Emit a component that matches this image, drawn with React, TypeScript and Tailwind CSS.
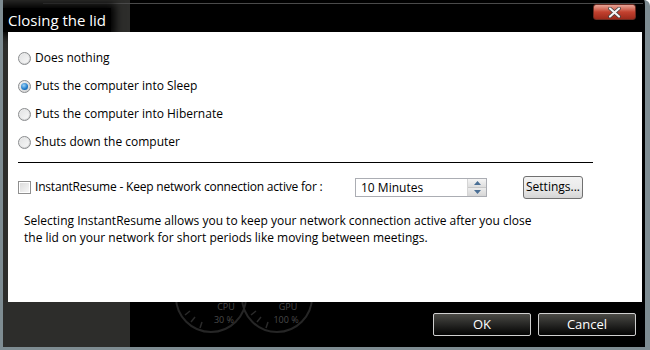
import React from "react";

const font = { fontFamily: '"Open Sans", "Noto Sans", sans-serif' };

function Radio({ checked = false }: { checked?: boolean }) {
  return (
    <span className="flex h-[13px] w-[13px] shrink-0 items-center justify-center rounded-full border border-[#8a8c8e] bg-gradient-to-br from-[#f4f4f4] to-[#cfd0d1]">
      {checked ? (
        <span className="h-[7px] w-[7px] rounded-full bg-[radial-gradient(circle_at_40%_35%,#9fd4f7,#1a78c9_60%,#0d4f8f)]" />
      ) : (
        <span className="h-[9px] w-[9px] rounded-full bg-gradient-to-br from-[#e2e3e4] to-[#f7f7f7]" />
      )}
    </span>
  );
}

function RadioRow({ label, checked }: { label: string; checked?: boolean }) {
  return (
    <div className="flex h-[28px] items-center gap-[4px]">
      <Radio checked={checked} />
      <span>{label}</span>
    </div>
  );
}

function Spinner() {
  return (
    <div className="flex w-[19px] flex-col border-l border-[#d5d5d5]">
      <div className="flex flex-1 items-center justify-center border-b border-[#c8c8c8] bg-gradient-to-b from-[#f5f5f5] to-[#dedede]">
        <svg width="7" height="4" viewBox="0 0 7 4">
          <path d="M0 4 L3.5 0 L7 4 Z" fill="#4a6f95" />
        </svg>
      </div>
      <div className="flex flex-1 items-center justify-center bg-gradient-to-b from-[#ececec] to-[#d6d6d6]">
        <svg width="7" height="4" viewBox="0 0 7 4">
          <path d="M0 0 L3.5 4 L7 0 Z" fill="#4a6f95" />
        </svg>
      </div>
    </div>
  );
}

export default function App() {
  return (
    <div
      className="relative h-[350px] w-[650px] overflow-hidden rounded-tr-[6px] border-b-[3px] border-l-[3px] border-r-[5px] border-[#7e8c92] bg-black text-[12px] text-black"
      style={font}
    >
      {/* desktop behind the glass */}
      <div className="absolute left-0 top-0 h-full w-[127px] bg-[#2d2d2b]" />
      <div className="absolute left-[40px] top-[3px] h-px w-[600px] bg-[#4a4a4a]" />
      <svg className="absolute left-[170px] top-[265px]" width="150" height="70" viewBox="0 0 150 70">
        <circle cx="38" cy="32" r="35" fill="none" stroke="#262626" strokeWidth="2" />
        <circle cx="104" cy="32" r="35" fill="none" stroke="#262626" strokeWidth="2" />
        <path d="M12 50 L17 46 M18 57 L22 52 M27 63 L29 57" stroke="#2a2a2a" strokeWidth="1.5" />
        <path d="M78 50 L83 46 M84 57 L88 52 M93 63 L95 57" stroke="#2a2a2a" strokeWidth="1.5" />
        <text x="53" y="45" fontSize="9" fill="#4a4a4a" textAnchor="middle">CPU</text>
        <text x="51" y="58" fontSize="9" fill="#4a4a4a" textAnchor="middle">30 %</text>
        <text x="115" y="45" fontSize="9" fill="#4a4a4a" textAnchor="middle">GPU</text>
        <text x="113" y="58" fontSize="9" fill="#4a4a4a" textAnchor="middle">100 %</text>
      </svg>

      <div className="relative flex h-full flex-col">
        {/* title bar */}
        <div className="flex h-[32px] items-start justify-between">
          <div className="mt-[8px] flex h-[24px] items-center bg-black px-[5px] text-[15px] leading-none text-white shadow-[0_0_8px_4px_#000]">
            Closing the lid
          </div>
          <button className="mr-[9px] mt-[4px] flex h-[16px] w-[43px] items-center justify-center rounded-[3px] border border-[#6b2a20] bg-gradient-to-b from-[#e7a496] via-[#c2412f] to-[#9c2a1b]">
            <svg width="13" height="11" viewBox="0 0 13 11">
              <path d="M2 1.5 L11 9.5 M11 1.5 L2 9.5" stroke="#3d3d3d" strokeWidth="3.6" strokeLinecap="round" />
              <path d="M2 1.5 L11 9.5 M11 1.5 L2 9.5" stroke="#f4f4f4" strokeWidth="2.2" strokeLinecap="round" />
            </svg>
          </button>
        </div>

        {/* content */}
        <div className="ml-[5px] h-[270px] w-[634px] bg-white pl-[10px] pt-[12px]">
          <RadioRow label="Does nothing" />
          <RadioRow label="Puts the computer into Sleep" checked />
          <RadioRow label="Puts the computer into Hibernate" />
          <RadioRow label="Shuts down the computer" />

          <div className="mt-[6px] h-px w-[575px] bg-black" />

          <div className="mt-[12px] flex h-[24px] items-center">
            <div className="flex w-[337px] items-center gap-[4px]">
              <span className="h-[13px] w-[13px] shrink-0 border border-[#8f8f8f] bg-white p-[1px]">
                <span className="block h-full w-full bg-gradient-to-br from-[#dcdcdc] to-[#f6f6f6]" />
              </span>
              <span className="tracking-[-0.2px]">InstantResume - Keep network connection active for :</span>
            </div>
            <div className="flex h-[19px] w-[132px] border border-[#abadb3] bg-white">
              <span className="flex-1 pl-[5px] leading-[17px]">10 Minutes</span>
              <Spinner />
            </div>
            <button className="ml-[36px] flex h-[23px] w-[60px] items-center justify-center rounded-[3px] border border-[#707070] bg-gradient-to-b from-[#f2f2f2] via-[#ebebeb] to-[#d5d5d5] text-black">
              Settings...
            </button>
          </div>

          <p className="ml-[6px] mt-[13px] whitespace-nowrap leading-[17px]">
            Selecting InstantResume allows you to keep your network connection active after you close
            <br />
            the lid on your network for short periods like moving between meetings.
          </p>
        </div>

        {/* footer */}
        <div className="flex flex-1 items-start justify-end gap-[7px] pr-[9px] pt-[11px]">
          <button className="h-[23px] w-[98px] rounded-[2px] border border-[#cfcfcf] bg-gradient-to-b from-[#4b4a46] via-[#262624] to-[#050505] text-[13px] text-white">
            OK
          </button>
          <button className="h-[23px] w-[98px] rounded-[2px] border border-[#cfcfcf] bg-gradient-to-b from-[#4b4a46] via-[#262624] to-[#050505] text-[13px] text-white">
            Cancel
          </button>
        </div>
      </div>
    </div>
  );
}
